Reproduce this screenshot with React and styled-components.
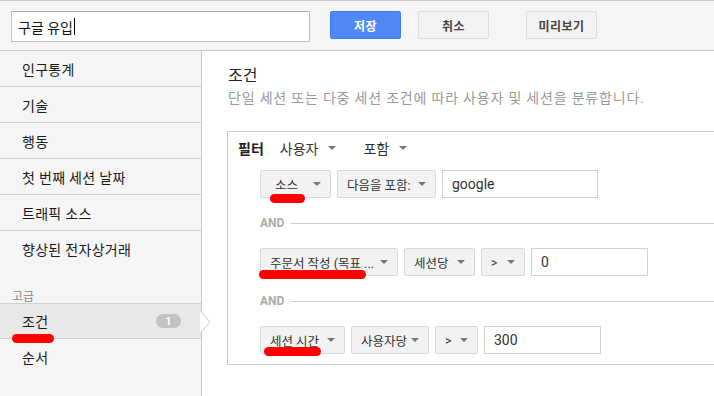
import React from "react";
import styled, { createGlobalStyle } from "styled-components";

const GlobalStyle = createGlobalStyle`
  html, body {
    margin: 0;
    padding: 0;
    background: #fff;
  }
  body {
    font-family: Roboto, "Noto Sans CJK KR", "Noto Sans", sans-serif;
    font-size: 13px;
    color: #222;
  }
`;

const Page = styled.div`
  width: 714px;
  height: 396px;
  overflow: hidden;
  display: flex;
  flex-direction: column;
`;

const Toolbar = styled.div`
  height: 51px;
  flex: none;
  box-sizing: border-box;
  border-top: 1px solid #c8c8c8;
  border-bottom: 1px solid #c8c8c8;
  background: #f5f5f5;
  display: flex;
  align-items: flex-start;
  padding: 10px 0 0 11px;
`;

const NameInput = styled.div`
  width: 299px;
  height: 31px;
  box-sizing: border-box;
  border: 1px solid #c0c0c0;
  border-top-color: #a8a8a8;
  background: #fff;
  display: flex;
  align-items: center;
  padding-left: 6px;
  font-size: 14px;
  color: #111;
`;

const Caret = styled.span`
  display: inline-block;
  width: 1px;
  height: 17px;
  background: #000;
  margin-left: 1px;
`;

const Button = styled.div`
  width: 71px;
  height: 28px;
  box-sizing: border-box;
  margin-left: ${(p) => p.$gap}px;
  border-radius: 2px;
  border: 1px solid ${(p) => (p.$primary ? "#3d7ff0" : "#dcdcdc")};
  background: ${(p) => (p.$primary ? "#5089f5" : "#f3f3f3")};
  color: ${(p) => (p.$primary ? "#fff" : "#444")};
  font-weight: 700;
  font-size: 12px;
  display: flex;
  align-items: center;
  justify-content: center;
  letter-spacing: 0.5px;
`;

const Body = styled.div`
  flex: 1;
  display: flex;
  min-height: 0;
`;

const Sidebar = styled.div`
  width: 201px;
  flex: none;
  background: #f5f5f5;
  border-right: 1px solid #c8c8c8;
  position: relative;
`;

const NavItem = styled.div`
  height: 36px;
  box-sizing: border-box;
  display: flex;
  align-items: center;
  padding: 0 20px 0 22px;
  font-size: 14px;
  letter-spacing: 0.3px;
  color: #1a1a1a;
  border-bottom: ${(p) => (p.$divider ? "1px solid #cfcfcf" : "none")};
  border-top: ${(p) => (p.$active ? "1px solid #cfcfcf" : "none")};
  background: ${(p) => (p.$active ? "#e8e8e8" : "transparent")};
  position: relative;
`;

const SectionLabel = styled.div`
  padding: 20px 0 0 12px;
  height: 16px;
  font-size: 12px;
  color: #888;
`;

const Badge = styled.span`
  margin-left: auto;
  width: 25px;
  height: 14px;
  border-radius: 7px;
  background: #c2c2c2;
  color: #fff;
  font-size: 11px;
  font-weight: 700;
  letter-spacing: 0;
  display: flex;
  align-items: center;
  justify-content: center;
`;

const Pointer = styled.svg`
  position: absolute;
  right: -11px;
  top: 7px;
`;

const Main = styled.div`
  flex: 1;
  padding: 15px 0 0 26px;
  overflow: hidden;
`;

const Title = styled.div`
  font-size: 16px;
  color: #222;
  line-height: 20px;
`;

const Subtitle = styled.div`
  font-size: 14px;
  color: #9a9a9a;
  margin-top: 3px;
  line-height: 18px;
  letter-spacing: 0.8px;
  white-space: nowrap;
`;

const FilterBox = styled.div`
  margin: 24px 0 0 -1px;
  width: 520px;
  box-sizing: border-box;
  border: 1px solid #c8c8c8;
  padding: 3px 0 10px 10px;
`;

const FilterHead = styled.div`
  display: flex;
  align-items: center;
  height: 26px;
  font-size: 14px;
`;

const HeadLabel = styled.span`
  font-weight: 700;
  color: #222;
  margin-right: 16px;
`;

const HeadSelect = styled.span`
  display: inline-flex;
  align-items: center;
  gap: 10px;
  color: #333;
  margin-right: ${(p) => p.$gap || 0}px;
`;

const Arrow = styled.span`
  width: 0;
  height: 0;
  border-left: 4px solid transparent;
  border-right: 4px solid transparent;
  border-top: 4px solid #777;
  margin-left: auto;
`;

const Rows = styled.div`
  padding-left: 22px;
  padding-top: 9px;
`;

const Row = styled.div`
  display: flex;
  gap: 6px;
  height: 28px;
  position: relative;
`;

const Select = styled.div`
  width: ${(p) => p.$w}px;
  box-sizing: border-box;
  border: 1px solid #d9d9d9;
  border-radius: 2px;
  background: #f2f2f2;
  display: flex;
  align-items: center;
  padding: 0 9px 0 ${(p) => p.$pl || 9}px;
  color: #333;
  font-size: 12.5px;
  white-space: nowrap;
`;

const TextField = styled.div`
  width: ${(p) => p.$w}px;
  box-sizing: border-box;
  border: 1px solid #d0d0d0;
  background: #fff;
  display: flex;
  align-items: center;
  padding-left: 9px;
  font-size: 14px;
  color: #333;
`;

const AndSep = styled.div`
  display: flex;
  align-items: center;
  height: 50px;
  color: #aaa;
  font-weight: 700;
  font-size: 12px;
  gap: 7px;
  margin-right: -40px;

  &::after {
    content: "";
    flex: 1;
    height: 1px;
    background: #cfcfcf;
  }
`;

const Mark = styled.span`
  position: absolute;
  left: ${(p) => p.$x}px;
  top: ${(p) => p.$y}px;
  width: ${(p) => p.$w}px;
  height: 9px;
  border-radius: 5px;
  background: #ff0000;
`;

const navItems = ["인구통계", "기술", "행동", "첫 번째 세션 날짜", "트래픽 소스"];

export default function App() {
  return (
    <Page>
      <GlobalStyle />
      <Toolbar>
        <NameInput>
          구글 유입<Caret />
        </NameInput>
        <Button $primary $gap={20}>저장</Button>
        <Button $gap={17}>취소</Button>
        <Button $gap={37}>미리보기</Button>
      </Toolbar>
      <Body>
        <Sidebar>
          {navItems.map((t) => (
            <NavItem key={t} $divider>{t}</NavItem>
          ))}
          <NavItem>향상된 전자상거래</NavItem>
          <SectionLabel>고급</SectionLabel>
          <NavItem $active $divider>
            조건
            <Badge>1</Badge>
            <Mark $x={12} $y={30} $w={42} />
            <Pointer width="12" height="22" viewBox="0 0 12 22">
              <path d="M0 0 L10 11 L0 22 Z" fill="#fff" />
              <path d="M0.5 0 L10 11 L0.5 22" fill="none" stroke="#c8c8c8" strokeWidth="1" />
            </Pointer>
          </NavItem>
          <NavItem>순서</NavItem>
        </Sidebar>
        <Main>
          <Title>조건</Title>
          <Subtitle>단일 세션 또는 다중 세션 조건에 따라 사용자 및 세션을 분류합니다.</Subtitle>
          <FilterBox>
            <FilterHead>
              <HeadLabel>필터</HeadLabel>
              <HeadSelect $gap={27}>사용자 <Arrow /></HeadSelect>
              <HeadSelect>포함 <Arrow /></HeadSelect>
            </FilterHead>
            <Rows>
              <Row>
                <Select $w={71} $pl={14}>소스<Arrow /></Select>
                <Select $w={99}>다음을 포함:<Arrow /></Select>
                <TextField $w={156}>google</TextField>
                <Mark $x={10} $y={24} $w={35} />
              </Row>
              <AndSep>AND</AndSep>
              <Row>
                <Select $w={138}>주문서 작성 (목표 ...<Arrow /></Select>
                <Select $w={71}>세션당<Arrow /></Select>
                <Select $w={44}>&gt;<Arrow /></Select>
                <TextField $w={117}>0</TextField>
                <Mark $x={-1} $y={22} $w={107} />
              </Row>
              <AndSep>AND</AndSep>
              <Row>
                <Select $w={85}>세션 시간<Arrow /></Select>
                <Select $w={78}>사용자당<Arrow /></Select>
                <Select $w={43}>&gt;<Arrow /></Select>
                <TextField $w={117}>300</TextField>
                <Mark $x={4} $y={21} $w={57} />
              </Row>
            </Rows>
          </FilterBox>
        </Main>
      </Body>
    </Page>
  );
}
